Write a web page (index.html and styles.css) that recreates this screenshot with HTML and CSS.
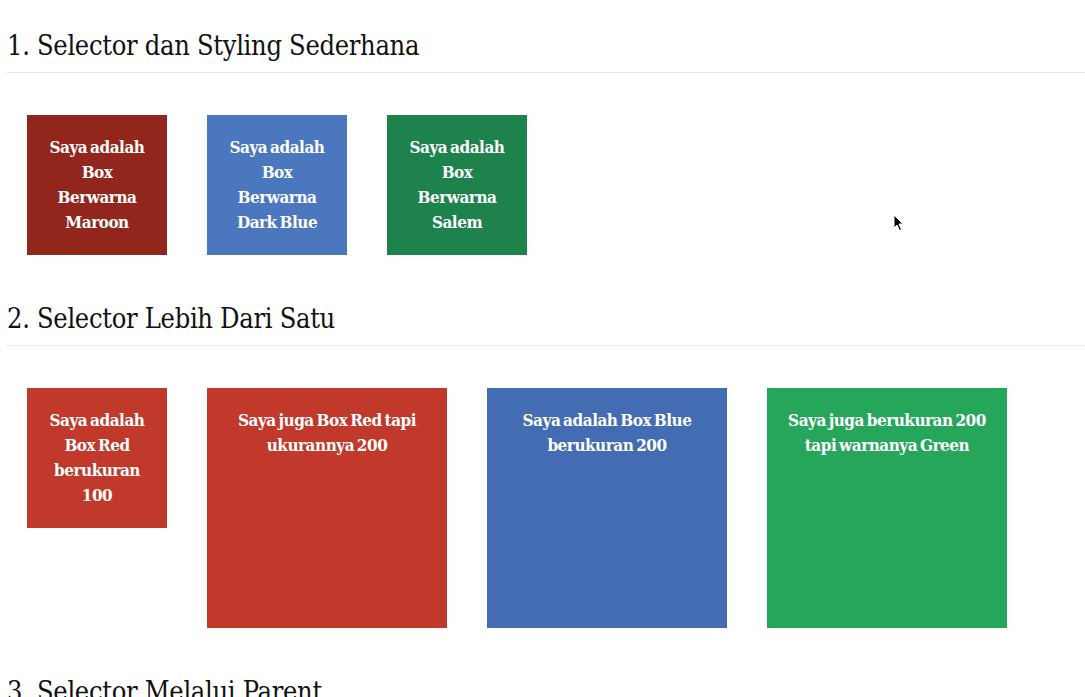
FILE: index.html
```html
<!DOCTYPE html>
<html lang="id">
<head>
<meta charset="utf-8">
<title>Selector CSS</title>
<link rel="stylesheet" href="styles.css">
</head>
<body>
<div class="page">
  <section class="section">
    <h2 class="title">1. Selector dan Styling Sederhana</h2>
    <div class="row">
      <div class="box small maroon">Saya adalah Box Berwarna Maroon</div>
      <div class="box small darkblue">Saya adalah Box Berwarna Dark Blue</div>
      <div class="box small salem">Saya adalah Box Berwarna Salem</div>
    </div>
  </section>
  <section class="section">
    <h2 class="title">2. Selector Lebih Dari Satu</h2>
    <div class="row">
      <div class="box small red">Saya adalah Box Red berukuran 100</div>
      <div class="box big red">Saya juga Box Red tapi ukurannya 200</div>
      <div class="box big blue">Saya adalah Box Blue berukuran 200</div>
      <div class="box big green">Saya juga berukuran 200 tapi warnanya Green</div>
    </div>
  </section>
  <section class="section">
    <h2 class="title">3. Selector Melalui Parent</h2>
  </section>
</div>
<svg class="cursor" width="12" height="18" viewBox="0 0 12 18"><path d="M1 1 L1 14 L4 11 L6.5 16.5 L8.5 15.5 L6 10 L10 10 Z" fill="#000" stroke="#fff" stroke-width="1"/></svg>
</body>
</html>
```
FILE: styles.css
```css
html, body {
  margin: 0;
  padding: 0;
  background: #fff;
}
.page {
  padding: 2px 0 0 7px;
  font-family: "DejaVu Serif Condensed", "DejaVu Serif", serif;
}
.title {
  margin: 0;
  padding: 27px 0 9px;
  font-size: 27px;
  line-height: 34px;
  font-weight: 400;
  letter-spacing: -0.3px;
  color: #111;
  border-bottom: 1px solid #e6e6e6;
}
.row {
  display: flex;
  align-items: flex-start;
  padding-top: 22px;
}
.box {
  box-sizing: content-box;
  margin: 20px;
  padding: 20px;
  color: #fff;
  font-size: 17px;
  line-height: 25px;
  font-weight: 700;
  letter-spacing: -0.5px;
  word-spacing: -2px;
  text-align: center;
}
.small { width: 100px; height: 100px; }
.big { width: 200px; height: 200px; }
.maroon { background: #93261c; }
.darkblue { background: #4b77be; }
.salem { background: #1e824c; }
.red { background: #c0392b; }
.blue { background: #446cb3; }
.green { background: #26a65b; }
.cursor {
  position: absolute;
  left: 893px;
  top: 214px;
}
```
